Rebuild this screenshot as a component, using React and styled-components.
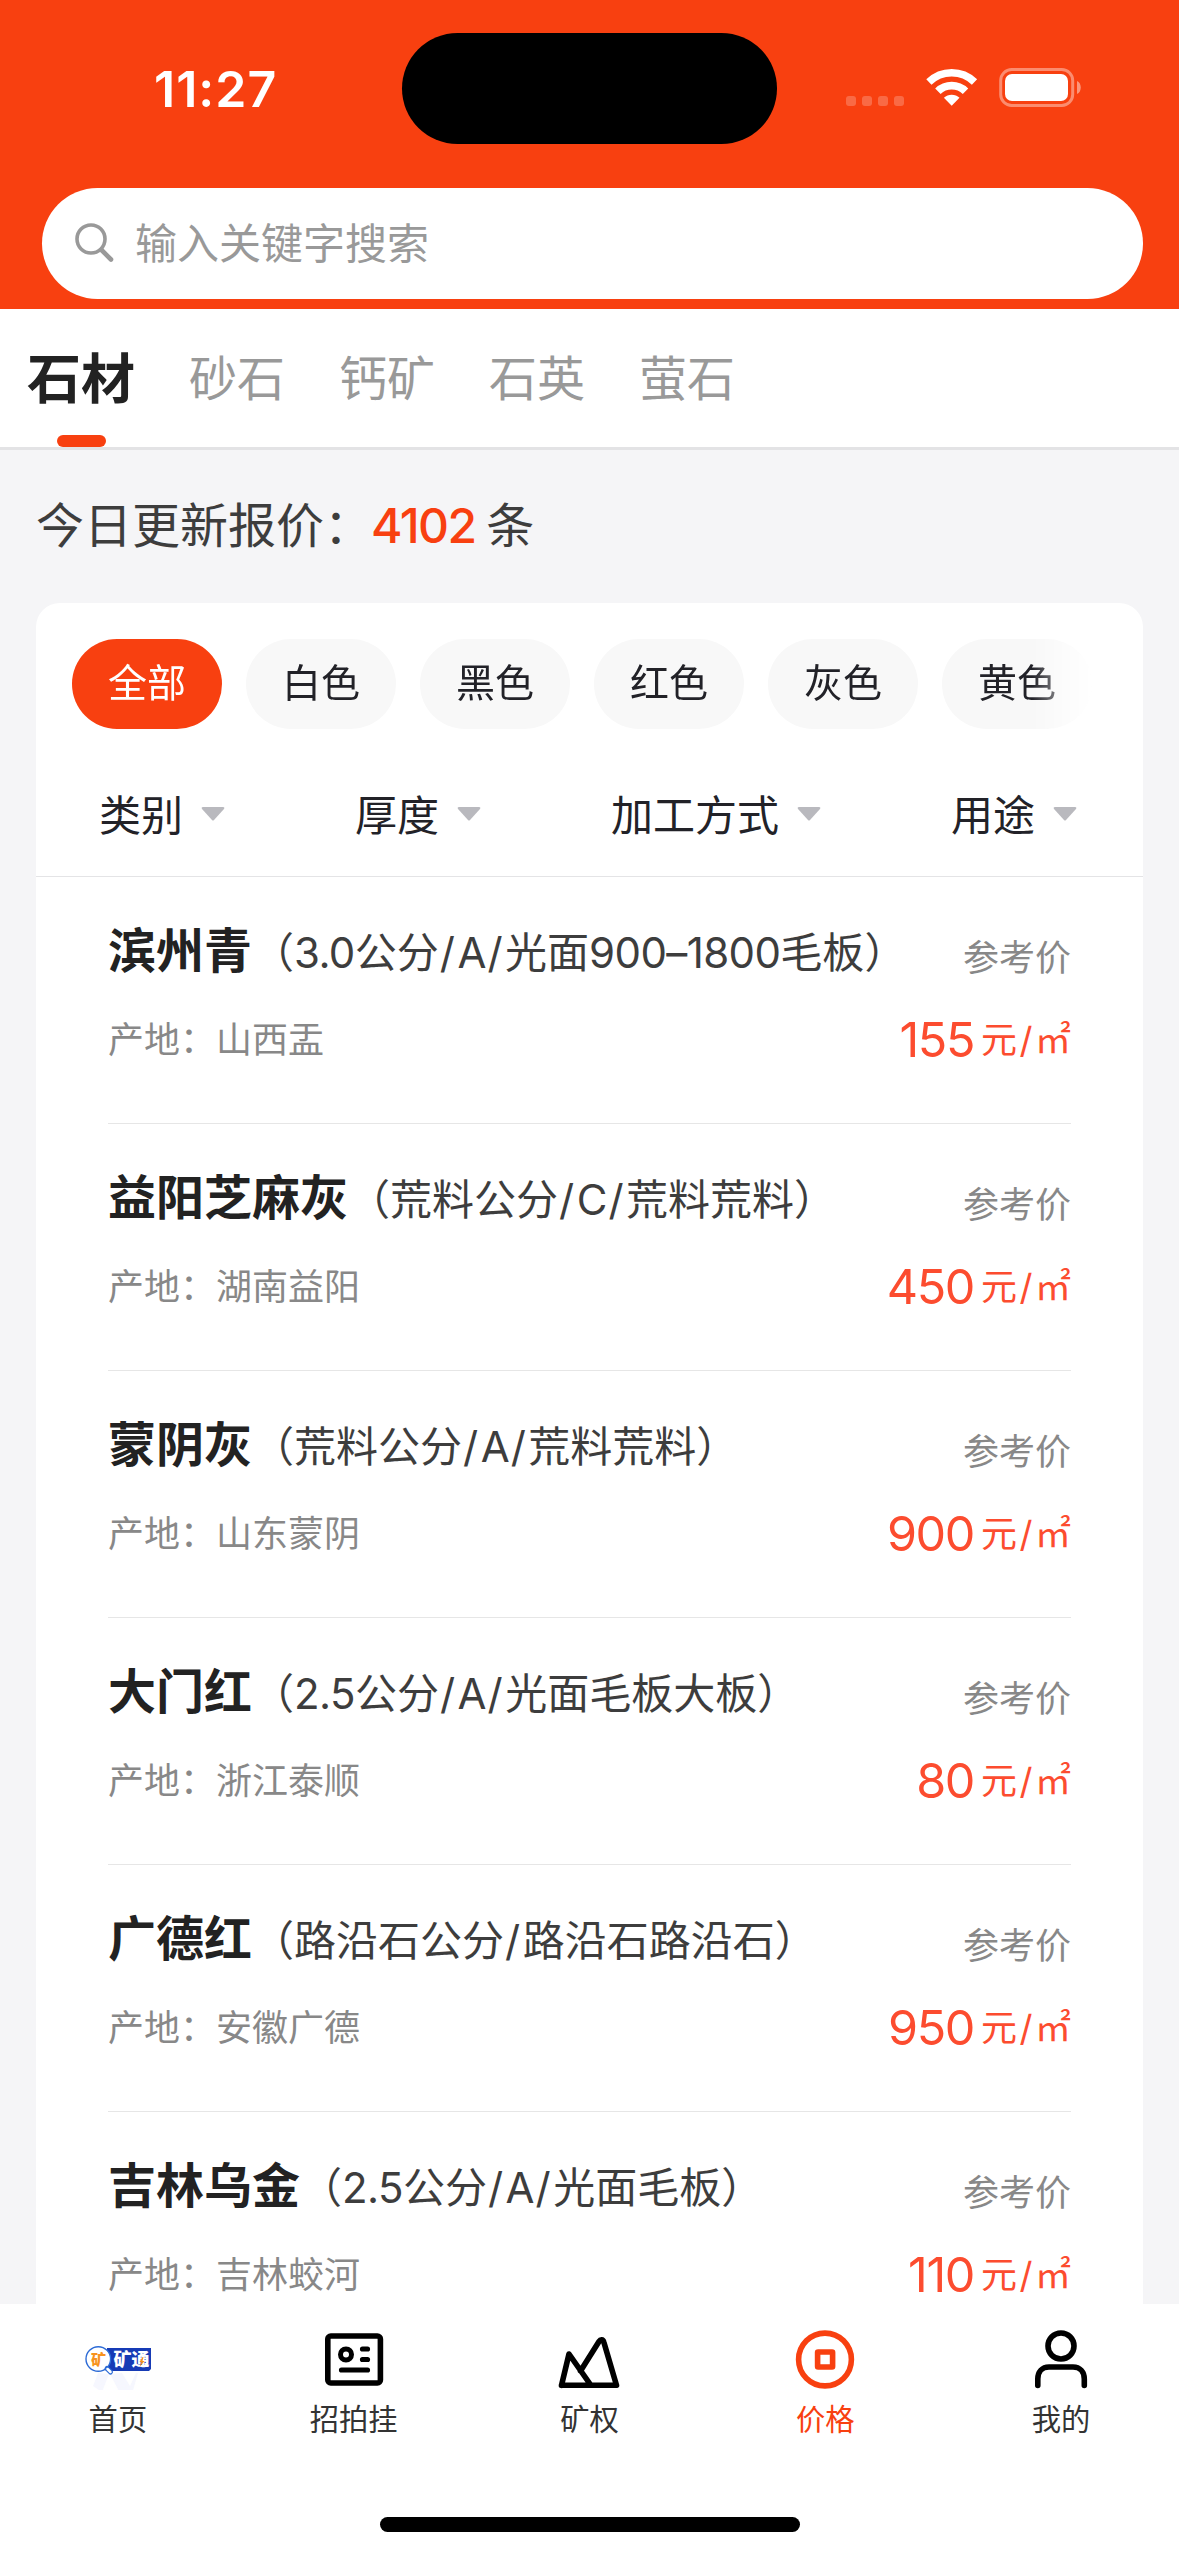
import styled, { createGlobalStyle } from 'styled-components'

const GlobalStyle = createGlobalStyle`
body {
  margin: 0;
  background-color: #f5f5f7;
  font-family: Inter, "Noto Sans CJK SC", sans-serif;
}
`;

const Screen = styled.div`
display: flex;
flex-direction: column;
width: 1179px;
height: 2556px;
overflow: hidden;
background-color: #f5f5f7;
`;

const Header = styled.div`
flex: none;
height: 309px;
background-color: #f84010;
`;

const StatusBar = styled.div`
display: flex;
flex-direction: row;
align-items: center;
box-sizing: border-box;
height: 188px;
padding: 0 98px 11px 154px;
`;

const Clock = styled.div`
width: 248px;
color: white;
font-size: 50px;
font-weight: 600;
line-height: 60px;
letter-spacing: 1px;
`;

const Island = styled.div`
width: 375px;
height: 111px;
border-radius: 56px;
background-color: black;
`;

const StatusIcons = styled.svg`
margin-left: auto;
`;

const SearchBox = styled.div`
display: flex;
flex-direction: row;
align-items: center;
box-sizing: border-box;
height: 111px;
margin: 0 36px 0 42px;
padding-left: 32px;
border-radius: 56px;
background-color: white;
`;

const SearchText = styled.div`
margin-left: 19px;
color: #999;
font-size: 42px;
line-height: 60px;
`;

const Tabs = styled.div`
display: flex;
flex-direction: row;
flex: none;
height: 138px;
border-bottom: 3px solid #e3e3e5;
background-color: white;
`;

const Tab = styled.div`
position: relative;
padding: 0 27px;
color: ${props => props.$active ? '#222' : '#999'};
font-size: ${props => props.$active ? '54px' : '48px'};
font-weight: ${props => props.$active ? 600 : 400};
line-height: ${props => props.$active ? '142px' : '139px'};
`;

const TabLine = styled.div`
position: absolute;
bottom: 0;
left: 57px;
width: 49px;
height: 12px;
border-radius: 6px;
background-color: #f84010;
`;

const Summary = styled.div`
flex: none;
height: 153px;
padding-left: 36px;
color: #3d3d3d;
font-size: 48px;
line-height: 151px;
`;

const Count = styled.span`
margin-left: -1px;
margin-right: 11px;
color: #f84010;
font-weight: 500;
letter-spacing: -1.6px;
`;

const Card = styled.div`
flex: 1;
min-height: 0;
overflow: hidden;
margin: 0 36px;
border-radius: 24px 24px 0 0;
background-color: white;
`;

const Chips = styled.div`
display: flex;
flex-direction: row;
gap: 24px;
width: 1020px;
padding: 36px 0 0 36px;
mask-image: linear-gradient(to right, #000 996px, transparent 1056px);
`;

const Chip = styled.div`
flex: none;
width: 150px;
height: 90px;
border-radius: 45px;
background-color: ${props => props.$active ? '#f84010' : '#f8f8f8'};
color: ${props => props.$active ? 'white' : '#222228'};
font-size: 39px;
line-height: 87px;
text-align: center;
`;

const Filters = styled.div`
display: flex;
flex-direction: row;
justify-content: space-between;
align-items: center;
box-sizing: border-box;
height: 148px;
padding: 26px 66px 0 63px;
border-bottom: 1px solid #e4e4e6;
`;

const Filter = styled.div`
display: flex;
flex-direction: row;
align-items: center;
gap: 18px;
color: #222228;
font-size: 42px;
line-height: 60px;

svg {
  margin-bottom: 4px;
}
`;

const Row = styled.div`
display: flex;
flex-direction: row;
box-sizing: border-box;
height: 247px;
margin: 0 72px;
padding-top: 38px;
border-bottom: 1px solid #e6e6e6;
white-space: nowrap;
`;

const StoneInfo = styled.div`
flex: 1;
min-width: 0;
`;

const Title = styled.div`
height: 72px;
line-height: 72px;
color: #3d3d3d;
font-size: 42px;
`;

const Name = styled.span`
color: #222;
font-size: 48px;
font-weight: 600;
`;

const Latin = styled.span`
letter-spacing: -0.6px;
`;

const Divider = styled.span`
padding: 0 2.5px 0 1px;
`;

const Origin = styled.div`
margin-top: 27px;
color: #888;
font-size: 36px;
line-height: 52px;
`;

const PriceSide = styled.div`
flex: none;
text-align: right;
`;

const PriceLabel = styled.div`
margin-top: 17px;
color: #888;
font-size: 36px;
line-height: 52px;
`;

const Price = styled.div`
height: 52px;
margin-top: 30px;
color: #fc4c2f;
font-size: 48.5px;
line-height: 52px;
letter-spacing: -1.4px;
`;

const Unit = styled.span`
margin-left: 7px;
font-size: 36px;
line-height: 36px;
letter-spacing: 0;
vertical-align: 4px;
`;

const Slash = styled.span`
display: inline-block;
width: 18px;
text-align: center;
`;

const NavBar = styled.div`
flex: none;
height: 252px;
background-color: white;
`;

const NavItems = styled.div`
display: grid;
grid-template-columns: repeat(5, 1fr);
height: 213px;
`;

const NavItem = styled.div`
display: flex;
flex-direction: column;
align-items: center;
padding-top: 20px;
color: ${props => props.$active ? '#f84010' : '#333'};
font-size: 29.3px;
line-height: 44px;

svg {
  margin-bottom: 8px;
}
`;

const HomeIndicator = styled.div`
width: 420px;
height: 15px;
margin: 0 auto;
border-radius: 8px;
background-color: black;
`;

const tabs = ['石材', '砂石', '钙矿', '石英', '萤石'];
const colors = ['全部', '白色', '黑色', '红色', '灰色', '黄色'];
const filters = ['类别', '厚度', '加工方式', '用途'];

const stones = [
  { name: '滨州青', spec: '3.0公分/A/光面900–1800毛板', origin: '山西盂', price: 155 },
  { name: '益阳芝麻灰', spec: '荒料公分/C/荒料荒料', origin: '湖南益阳', price: 450 },
  { name: '蒙阴灰', spec: '荒料公分/A/荒料荒料', origin: '山东蒙阴', price: 900 },
  { name: '大门红', spec: '2.5公分/A/光面毛板大板', origin: '浙江泰顺', price: 80 },
  { name: '广德红', spec: '路沿石公分/路沿石路沿石', origin: '安徽广德', price: 950 },
  { name: '吉林乌金', spec: '2.5公分/A/光面毛板', origin: '吉林蛟河', price: 110 },
];

// digits and slashes get their own spacing, the chinese text does not
const renderSpec = (spec) =>
  spec.split(/([0-9.–]+|\/)/).map((part, index) => {
    if (part === '/') return <Divider key={index}>/</Divider>;
    return index % 2 ? <Latin key={index}>{part}</Latin> : part;
  });

const LogoIcon = () => (
  <svg width="66" height="66" viewBox="0 0 66 66">
    <path d="M13 49 L24 50 L17 68 L8 62 Z M25 50 L37 49 L45 62 L51 49 H53 L47 70 L36 71 Z" fill="#f6f7fe" />
    <path d="M22 24 H66 V45 L64 47 H22 Z" fill="#173bb5" />
    <circle cx="13.3" cy="35" r="12.3" fill="white" stroke="#2d6bd6" strokeWidth="1.4" />
    <path d="M22 44.5 L25.5 48" stroke="#2d6bd6" strokeWidth="5" strokeLinecap="round" />
    <path d="M22.5 45 L25.5 48" stroke="white" strokeWidth="2.5" strokeLinecap="round" />
    <text x="6" y="40.5" fontSize="15" fontWeight="800" fill="#f7931e">矿</text>
    <text x="28.5" y="42" fontSize="18" fontWeight="800" fill="white">矿通</text>
    <path d="M57.5 33 L54.5 38 H56.5 L54.5 43 L59.5 37 H57.5 L58.5 33 Z" fill="#f7931e" />
  </svg>
);

const AuctionIcon = () => (
  <svg width="66" height="66" viewBox="0 0 66 66" fill="none" stroke="black" strokeWidth="5.6" strokeLinecap="round">
    <rect x="6.8" y="12" width="52.6" height="47" rx="3" />
    <circle cx="25" cy="30.5" r="5.5" strokeWidth="5" />
    <path d="M41.5 25 H46.5 M41.5 35.5 H46.5 M20.5 46 H46.5" strokeWidth="5.2" />
  </svg>
);

const MountainIcon = () => (
  <svg width="66" height="66" viewBox="0 0 66 66" fill="none" stroke="black" strokeWidth="5.6" strokeLinecap="round" strokeLinejoin="round">
    <path d="M5.5 61.3 L13 30 L34 60 M24.5 47 L43 17.5 C44.5 15 47 15 47.8 18 L60.5 61.3 H5.5" />
  </svg>
);

const CoinIcon = () => (
  <svg width="66" height="66" viewBox="0 0 66 66" fill="none" stroke="#f84010" strokeWidth="5.6">
    <circle cx="33" cy="35.5" r="26.4" />
    <rect x="25.6" y="28" width="15" height="15" rx="0.5" />
  </svg>
);

const UserIcon = () => (
  <svg width="66" height="66" viewBox="0 0 66 66" fill="none" stroke="black" strokeWidth="5.6" strokeLinecap="round">
    <circle cx="33" cy="22" r="13" />
    <path d="M9.8 61.5 V55 C9.8 48 14 43 21 43 H45 C52 43 56.3 48 56.3 55 V61.5" />
  </svg>
);

const navItems = [
  { label: '首页', Icon: LogoIcon },
  { label: '招拍挂', Icon: AuctionIcon },
  { label: '矿权', Icon: MountainIcon },
  { label: '价格', Icon: CoinIcon },
  { label: '我的', Icon: UserIcon },
];

function App() {
  return (
    <>
      <GlobalStyle />
      <Screen>
        <Header>
          <StatusBar>
            <Clock>11:27</Clock>
            <Island />
            <StatusIcons width="236" height="50" viewBox="0 0 236 50" fill="white">
              <g opacity="0.22">
                <rect x="1" y="32" width="10" height="10" rx="3" />
                <rect x="17" y="32" width="10" height="10" rx="3" />
                <rect x="33" y="32" width="10" height="10" rx="3" />
                <rect x="49" y="32" width="10" height="10" rx="3" />
              </g>
              <path d="M98.9 33.8 A11.2 11.2 0 0 1 114.5 33.8 L106.7 41.8 Z" />
              <g fill="none" stroke="white">
                <path d="M92.9 27.3 A19.8 19.8 0 0 1 120.5 27.3" strokeWidth="7.8" />
                <path d="M83.9 18 A32.7 32.7 0 0 1 129.5 18" strokeWidth="7.5" />
              </g>
              <rect x="155.7" y="5.5" width="72" height="36" rx="11" fill="none" stroke="white" strokeOpacity="0.4" strokeWidth="3" />
              <rect x="160" y="10" width="63" height="27" rx="7" />
              <path d="M232 17 C237 19 237 28 232 30 Z" opacity="0.45" />
            </StatusIcons>
          </StatusBar>
          <SearchBox>
            <svg width="42" height="42" viewBox="0 0 42 42" fill="none" stroke="#999">
              <circle cx="17" cy="16" r="14" strokeWidth="3.6" />
              <path d="M27.5 27 L37 36.5" strokeWidth="4.6" strokeLinecap="round" />
            </svg>
            <SearchText>输入关键字搜索</SearchText>
          </SearchBox>
        </Header>

        <Tabs>
          {tabs.map((tab, index) => (
            <Tab key={tab} $active={index === 0}>
              {tab}
              {index === 0 && <TabLine />}
            </Tab>
          ))}
        </Tabs>

        <Summary>
          今日更新报价：<Count>4102</Count>条
        </Summary>

        <Card>
          <Chips>
            {colors.map((color, index) => (
              <Chip key={color} $active={index === 0}>{color}</Chip>
            ))}
          </Chips>
          <Filters>
            {filters.map((filter) => (
              <Filter key={filter}>
                {filter}
                <svg width="24" height="16" viewBox="0 0 24 16">
                  <path d="M2 1 H22 Q24 1 23 3 L13 14 Q12 15 11 14 L1 3 Q0 1 2 1 Z" fill="#b9b9be" />
                </svg>
              </Filter>
            ))}
          </Filters>
          {stones.map((stone) => (
            <Row key={stone.name}>
              <StoneInfo>
                <Title><Name>{stone.name}</Name>（{renderSpec(stone.spec)}）</Title>
                <Origin>产地：{stone.origin}</Origin>
              </StoneInfo>
              <PriceSide>
                <PriceLabel>参考价</PriceLabel>
                <Price>{stone.price}<Unit>元<Slash>/</Slash>㎡</Unit></Price>
              </PriceSide>
            </Row>
          ))}
        </Card>

        <NavBar>
          <NavItems>
            {navItems.map(({ label, Icon }, index) => (
              <NavItem key={label} $active={index === 3}>
                <Icon />
                {label}
              </NavItem>
            ))}
          </NavItems>
          <HomeIndicator />
        </NavBar>
      </Screen>
    </>
  );
}

export default App;
